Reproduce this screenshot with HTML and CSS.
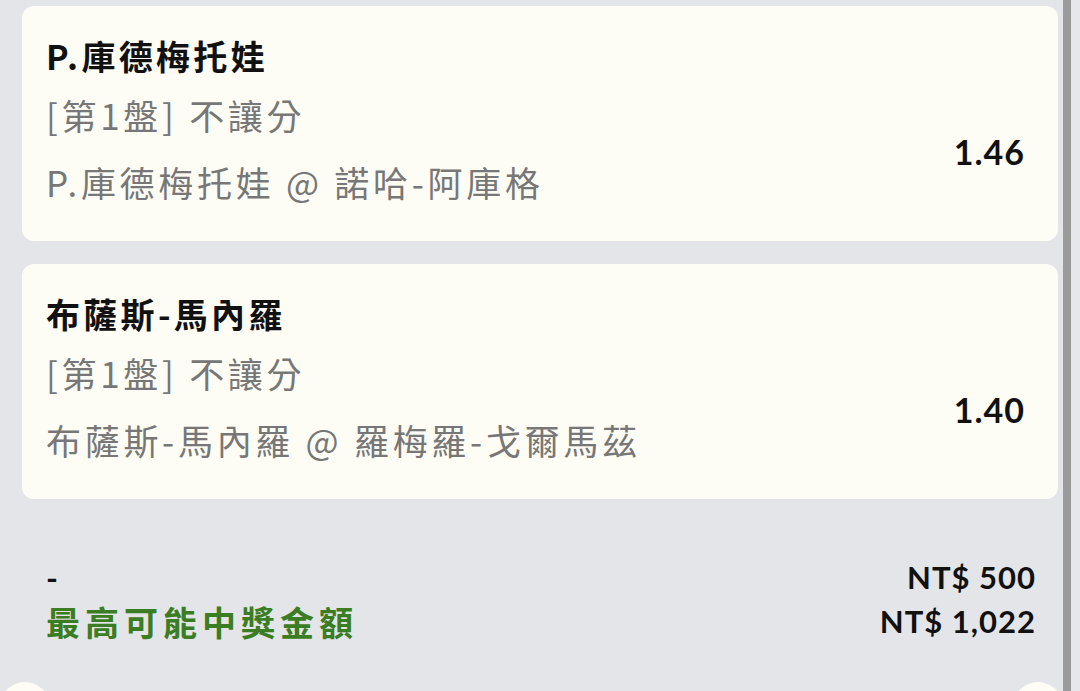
FILE: index.html
```html
<!DOCTYPE html>
<html lang="zh-Hant">
<head>
  <meta charset="UTF-8">
  <meta name="viewport" content="width=device-width, initial-scale=1.0">
  <title>投注單</title>
  <link rel="stylesheet" href="styles.css">
</head>
<body>

<div class="screen">
  <div class="slip">

    <div class="betCard">
      <div class="pick">P.庫德梅托娃</div>
      <div class="market">[第1盤] 不讓分</div>
      <div class="match">P.庫德梅托娃 @ 諾哈-阿庫格</div>
      <div class="odds">1.46</div>
    </div>

    <div class="betCard">
      <div class="pick">布薩斯-馬內羅</div>
      <div class="market">[第1盤] 不讓分</div>
      <div class="match">布薩斯-馬內羅 @ 羅梅羅-戈爾馬茲</div>
      <div class="odds">1.40</div>
    </div>

    <div class="summary">
      <div class="summaryRow">
        <span class="stakeLabel">-</span>
        <span class="amount">NT$ 500</span>
      </div>
      <div class="summaryRow">
        <span class="winLabel">最高可能中獎金額</span>
        <span class="amount">NT$ 1,022</span>
      </div>
    </div>

    <div class="actions">
      <span class="roundBtn"></span>
      <span class="roundBtn"></span>
    </div>

  </div>
  <div class="rail"></div>
  <div class="edge"></div>
</div>

</body>
</html>
```

FILE: styles.css
```css
html, body {
  margin: 0;
  height: 691px;
  overflow: hidden;
  background-color: #e4e5e8;
  font-family: Lato, "Noto Sans CJK TC", sans-serif;
}
.screen {
  display: flex;
  height: 691px;
}
.slip {
  width: 1063px;
  display: flex;
  flex-direction: column;
  padding: 6px 5px 0 22px;
  box-sizing: border-box;
}
.rail {
  width: 8px;
  background-color: #9b9b9b;
}
.edge {
  flex: 1;
  background-color: #e6e7ea;
}
.betCard {
  background-color: #fefdf5;
  border-radius: 12px;
  padding: 28px 33px 34px 24px;
  margin-bottom: 23px;
  display: grid;
  grid-template-columns: 1fr auto;
}
.pick {
  grid-column: 1 / 3;
  font-family: "Noto Sans CJK TC", sans-serif;
  font-size: 34px;
  font-weight: 700;
  line-height: 44px;
  letter-spacing: 3.3px;
  color: #111;
}
.market, .match {
  grid-column: 1;
  font-family: "Noto Sans CJK TC", sans-serif;
  font-size: 35px;
  line-height: 50px;
  letter-spacing: 3.7px;
  color: #777;
}
.market {
  grid-row: 2;
  margin-top: 12px;
}
.match {
  grid-row: 3;
  margin-top: 17px;
}
.odds {
  grid-column: 2;
  grid-row: 2 / 4;
  align-self: center;
  padding-top: 19px;
  font-size: 34px;
  font-weight: 700;
  letter-spacing: 1px;
  line-height: 40px;
  color: #111;
}
.summary {
  margin-top: 33px;
  padding: 0 22px 0 24px;
}
.summaryRow {
  display: flex;
  justify-content: space-between;
  align-items: center;
  height: 44px;
}
.stakeLabel {
  font-size: 32px;
  font-weight: 700;
  color: #111;
}
.winLabel {
  font-family: "Noto Sans CJK TC", sans-serif;
  font-size: 34px;
  font-weight: 700;
  letter-spacing: 5px;
  color: #3b7d23;
}
.amount {
  font-size: 31px;
  font-weight: 700;
  letter-spacing: 1px;
  color: #111;
}
.actions {
  display: flex;
  justify-content: space-between;
  height: 9px;
  overflow: hidden;
  margin: 39px -5px 0 -22px;
}
.roundBtn {
  width: 50px;
  height: 50px;
  flex-shrink: 0;
  border-radius: 50%;
  background-color: #fefdf5;
}
```
